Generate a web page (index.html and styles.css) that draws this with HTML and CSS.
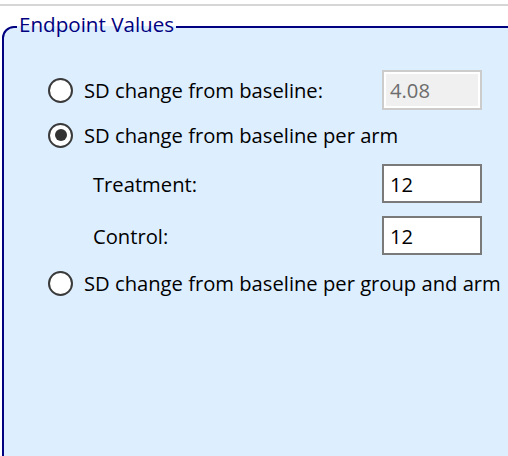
FILE: index.html
```html
<!DOCTYPE html>
<html>
<head>
<meta charset="utf-8">
<link rel="stylesheet" href="styles.css">
</head>
<body>
<div class="topline"></div>
<fieldset class="group">
  <legend class="group-title">Endpoint Values</legend>
  <div class="rows">
    <div class="row row-1">
      <span class="radio"></span>
      <span class="label">SD change from baseline:</span>
      <span class="textbox disabled">4.08</span>
    </div>
    <div class="row row-2">
      <span class="radio checked"></span>
      <span class="label">SD change from baseline per arm</span>
    </div>
    <div class="row row-3 sub">
      <span class="label">Treatment:</span>
      <span class="textbox">12</span>
    </div>
    <div class="row row-4 sub">
      <span class="label">Control:</span>
      <span class="textbox">12</span>
    </div>
    <div class="row row-5">
      <span class="radio"></span>
      <span class="label">SD change from baseline per group and arm</span>
    </div>
  </div>
</fieldset>
</body>
</html>
```
FILE: styles.css
```css
html, body {
  margin: 0;
  padding: 0;
  background: #ffffff;
  overflow: hidden;
  width: 508px;
  height: 456px;
}
body {
  font-family: "Open Sans", "Noto Sans", sans-serif;
  font-size: 20.2px;
  color: #000;
}
.topline {
  margin-top: 4px;
  height: 2px;
  background: #d6d6d6;
}
.group {
  margin: 1px 0 0 2px;
  padding: 0;
  width: 640px;
  height: 600px;
  border: 2px solid #000080;
  border-top-left-radius: 12px;
  background: #ddeeff;
  box-sizing: border-box;
}
.group-title {
  margin-left: 13px;
  padding: 3px 2px 9px 2px;
  line-height: 28px;
  color: #000080;
  font-size: 20.6px;
}
.rows {
  margin-left: 44px;
  padding-top: 23px;
  width: 434px;
  display: flex;
  flex-direction: column;
}
.row {
  display: flex;
  align-items: center;
  height: 40px;
  white-space: nowrap;
}
.row-2 { margin-top: 5px; }
.row-3 { margin-top: 9px; height: 39px; }
.row-4 { margin-top: 13px; height: 39px; }
.row-5 { margin-top: 8px; }
.radio {
  width: 25px;
  height: 25px;
  box-sizing: border-box;
  border: 2px solid #3a3a3a;
  border-radius: 50%;
  background: #fff;
  margin-right: 11px;
  flex: none;
  display: flex;
  align-items: center;
  justify-content: center;
}
.radio.checked::after {
  content: "";
  width: 12px;
  height: 12px;
  border-radius: 50%;
  background: #333;
}
.sub .label {
  padding-left: 45px;
}
.label {
  flex: 1;
}
.textbox {
  flex: none;
  width: 100px;
  height: 100%;
  box-sizing: border-box;
  border: 2px solid #7a7a7a;
  background: #fff;
  padding-left: 6px;
  display: flex;
  align-items: center;
}
.textbox.disabled {
  border-color: #cccccc;
  background: #f0f0f0;
  box-shadow: inset 0 0 0 2px #fff;
  color: #6d6d6d;
}
```
